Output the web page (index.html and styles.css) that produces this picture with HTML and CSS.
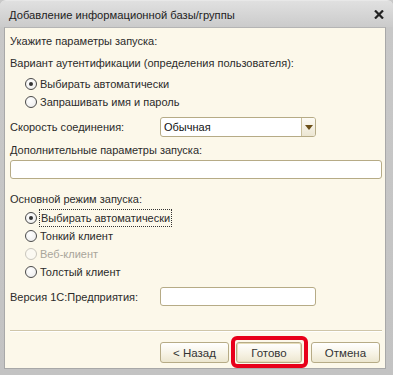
FILE: index.html
```html
<!DOCTYPE html>
<html lang="ru">
<head>
<meta charset="utf-8">
<link rel="stylesheet" href="styles.css">
</head>
<body>
<div class="window">
  <div class="titlebar">
    <span class="title">Добавление информационной базы/группы</span>
    <svg class="close" width="10" height="9" viewBox="0 0 10 9"><path d="M1 0.5 L9 8.5 M9 0.5 L1 8.5" stroke="#222" stroke-width="2.2" fill="none"/></svg>
  </div>
  <div class="client">
    <div class="row r1">Укажите параметры запуска:</div>
    <div class="row r2">Вариант аутентификации (определения пользователя):</div>
    <div class="radio r3"><span class="dot checked"></span><span>Выбирать автоматически</span></div>
    <div class="radio"><span class="dot"></span><span>Запрашивать имя и пароль</span></div>
    <div class="field speed">
      <span class="flabel">Скорость соединения:</span>
      <div class="select"><span class="value">Обычная</span><span class="dd"><svg width="8" height="5" viewBox="0 0 8 5"><path d="M0 0 H8 L4 5 Z" fill="#6b4f18"/></svg></span></div>
    </div>
    <div class="row r5">Дополнительные параметры запуска:</div>
    <div class="input wide"></div>
    <div class="row r6">Основной режим запуска:</div>
    <div class="radio r7"><span class="dot checked"></span><span class="focus">Выбирать автоматически</span></div>
    <div class="radio"><span class="dot"></span><span>Тонкий клиент</span></div>
    <div class="radio disabled"><span class="dot"></span><span>Веб-клиент</span></div>
    <div class="radio"><span class="dot"></span><span>Толстый клиент</span></div>
    <div class="field version">
      <span class="flabel">Версия 1С:Предприятия:</span>
      <div class="input short"></div>
    </div>
    <div class="sep"></div>
    <div class="buttons">
      <button class="btn">&lt; Назад</button>
      <button class="btn default">Готово<span class="mark"></span></button>
      <button class="btn">Отмена</button>
    </div>
  </div>
</div>
</body>
</html>
```

FILE: styles.css
```css
* { box-sizing: border-box; }
html, body { margin: 0; padding: 0; }
body {
  background: #c9c9c9;
  font-family: "Liberation Sans", Arial, sans-serif;
  font-size: 11px;
  color: #2b2b2b;
}
.window {
  width: 393px;
  height: 375px;
  border-radius: 6px 6px 0 0;
  background: linear-gradient(#dcdcdc 0px, #c8c8c8 27px, #c3c3c3 100%);
  border-top: 1px solid #e8e8e8;
  display: flex;
  flex-direction: column;
  overflow: hidden;
}
.titlebar {
  height: 26px;
  flex: none;
  display: flex;
  align-items: center;
  justify-content: space-between;
  padding: 2px 9px 0 9px;
  background: linear-gradient(#e0e0e0, #cbcbcb);
}
.title {
  font-size: 11.2px;
  color: #222;
}
.close { margin-top: -1px; }
.client {
  margin: 0 7px 0 4px;
  height: 342px;
  flex: none;
  background: #fcf8ea;
  border: 1px solid #a8a8a8;
  border-top-color: #b4b4b4;
  padding: 4px 5px 0 5px;
  display: flex;
  flex-direction: column;
}
.row {
  height: 18px;
  line-height: 18px;
  white-space: nowrap;
}
.r1 { margin-top: 0; }
.r2 { margin-top: 4px; }
.radio {
  height: 18px;
  display: flex;
  align-items: center;
  padding-left: 15px;
  white-space: nowrap;
}
.r3 { margin-top: 3px; }
.dot {
  width: 12px;
  height: 12px;
  border-radius: 50%;
  border: 1px solid #4a4a4a;
  background: radial-gradient(circle at 40% 35%, #ffffff, #e9e9e9);
  margin-right: 3px;
  position: relative;
  flex: none;
}
.dot.checked::after {
  content: "";
  position: absolute;
  left: 3px;
  top: 3px;
  width: 4px;
  height: 4px;
  border-radius: 50%;
  background: #333;
}
.disabled { color: #a9a59a; }
.disabled .dot { border-color: #c9c6bd; background: #fbf9f2; }
.focus {
  outline: 1px dotted #333;
  outline-offset: 0;
  line-height: 16px;
  padding: 0 1px;
}
.field {
  display: flex;
  align-items: center;
}
.flabel { width: 150px; flex: none; }
.speed { margin-top: 6px; height: 20px; }
.select {
  width: 156px;
  height: 20px;
  border: 1px solid #b6ab86;
  border-radius: 3px;
  background: #fff;
  display: flex;
  overflow: hidden;
}
.select .value {
  flex: 1;
  line-height: 18px;
  padding-left: 3px;
  color: #111;
}
.dd {
  width: 14px;
  border-left: 1px solid #c9bf9c;
  background: linear-gradient(#fdfbf4, #ece6d2);
  display: flex;
  align-items: center;
  justify-content: center;
}
.r5 { margin-top: 4px; }
.input {
  background: #fff;
  border: 1px solid #b6ab86;
  border-radius: 3px;
}
.wide { width: 372px; height: 19px; margin-top: 1px; }
.r6 { margin-top: 11px; }
.r7 { margin-top: 1px; }
.version { margin-top: 6px; height: 19px; }
.short { width: 156px; height: 19px; }
.sep {
  margin-top: 24px;
  height: 2px;
  width: 372px;
  border-top: 1px solid #cfc6a9;
  border-bottom: 1px solid #ffffff;
}
.buttons {
  margin-top: 10px;
  display: flex;
  justify-content: flex-end;
  gap: 7px;
  padding-right: 0;
}
.btn {
  font-family: "Liberation Sans", Arial, sans-serif;
  font-size: 11.5px;
  color: #333;
  height: 21px;
  width: 69px;
  padding: 0;
  border: 1px solid #b6ab86;
  border-radius: 3px;
  background: linear-gradient(#ffffff, #f6f2e3 60%, #ece6d0);
  position: relative;
}
.btn.default {
  width: 66px;
  margin-right: 2px;
  box-shadow: inset 0 0 0 1px #e6dcb8;
}
.mark {
  position: absolute;
  left: -6px;
  top: -7px;
  right: -7px;
  bottom: -6px;
  border: 4px solid #e8001a;
  border-radius: 6px;
  pointer-events: none;
}
```
